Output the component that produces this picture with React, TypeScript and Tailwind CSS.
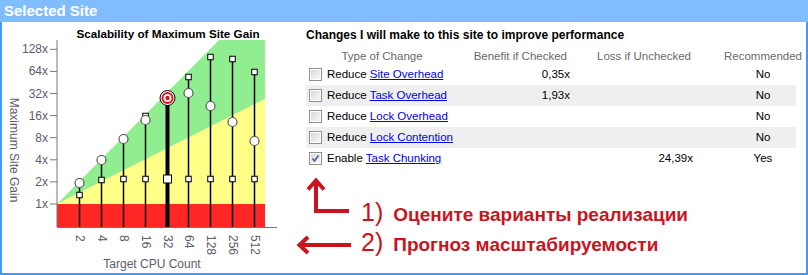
const rows = [
  { verb: "Reduce", link: "Site Overhead", benefit: "0,35x", loss: "", rec: "No", checked: false },
  { verb: "Reduce", link: "Task Overhead", benefit: "1,93x", loss: "", rec: "No", checked: false },
  { verb: "Reduce", link: "Lock Overhead", benefit: "", loss: "", rec: "No", checked: false },
  { verb: "Reduce", link: "Lock Contention", benefit: "", loss: "", rec: "No", checked: false },
  { verb: "Enable", link: "Task Chunking", benefit: "", loss: "24,39x", rec: "Yes", checked: true },
];

// pixel positions measured off the chart (page coordinates)
const series = [
  { n: 2, circle: 183, squares: [195] },
  { n: 4, circle: 160, squares: [180] },
  { n: 8, circle: 139, squares: [179] },
  { n: 16, circle: 120, squares: [116, 179] },
  { n: 32, target: 98, squares: [179] },
  { n: 64, circle: 93, squares: [77, 179] },
  { n: 128, circle: 106, squares: [57, 179] },
  { n: 256, circle: 122, squares: [59, 179] },
  { n: 512, circle: 141, squares: [72, 179] },
];

const yTicks = ["1x", "2x", "4x", "8x", "16x", "32x", "64x", "128x"];

const X = (n: number) => 57 + 21.9 * Math.log2(n);
const Yg = (i: number) => 204 - 22.1 * i;

function Chart() {
  return (
    <svg width={288} height={251} viewBox="2 22 288 251" className="shrink-0">
      <text x={168} y={38} textAnchor="middle" fontSize={11.7} fontWeight={700} fill="#000">
        Scalability of Maximum Site Gain
      </text>

      <polygon points="57,204 219,40 265,40 265,99" fill="#90ee90" />
      <polygon points="57,204 265,99 265,204" fill="#ffff88" />
      <rect x={57} y={204} width={208} height={23} fill="#ff2626" />

      <line x1={57} y1={40} x2={57} y2={227} stroke="#777" strokeWidth={1} />
      <line x1={57} y1={227.5} x2={277} y2={227.5} stroke="#777" strokeWidth={1} />

      {yTicks.map((t, i) => (
        <g key={t}>
          <line x1={50} y1={Yg(i)} x2={57} y2={Yg(i)} stroke="#777" />
          <text x={48} y={Yg(i) + 4} textAnchor="end" fontSize={12} fill="#5c5c6c">
            {t}
          </text>
        </g>
      ))}

      {series.map((s) => {
        const x = Math.round(X(s.n)) + 0.5;
        const ys = [...s.squares, s.circle ?? 999, s.target ?? 999];
        const top = Math.min(...ys);
        return (
          <line
            key={"l" + s.n}
            x1={x}
            y1={227}
            x2={x}
            y2={top}
            stroke="#000"
            strokeWidth={s.target ? 4 : 1.5}
          />
        );
      })}

      {series.map((s) => {
        const x = Math.round(X(s.n)) + 0.5;
        return s.squares.map((sy) => {
          const big = s.target && sy === 179;
          const h = big ? 8 : 5.5;
          return (
            <rect
              key={"s" + s.n + sy}
              x={x - h / 2}
              y={sy - h / 2}
              width={h}
              height={h}
              fill="#fff"
              stroke="#000"
              strokeWidth={1}
            />
          );
        });
      })}

      {series.map((s) => {
        const x = Math.round(X(s.n)) + 0.5;
        if (s.target) {
          return (
            <g key={"t" + s.n}>
              <circle cx={x} cy={s.target} r={7.5} fill="#fff" stroke="#000" strokeWidth={1} />
              <circle cx={x} cy={s.target} r={6} fill="#e8101a" />
              <circle cx={x} cy={s.target} r={4} fill="#fff" />
              <circle cx={x} cy={s.target} r={2.2} fill="#e8101a" />
            </g>
          );
        }
        return (
          <circle
            key={"c" + s.n}
            cx={x}
            cy={s.circle}
            r={4.5}
            fill="#fff"
            stroke="#555"
            strokeWidth={1.2}
          />
        );
      })}

      {series.map((s) => (
        <text
          key={"x" + s.n}
          transform={`translate(${Math.round(X(s.n)) + 0.5},235) rotate(90)`}
          fontSize={12}
          fill="#5c5c6c"
          dominantBaseline="middle"
        >
          {s.n}
        </text>
      ))}

      <text x={152} y={268} textAnchor="middle" fontSize={12} fill="#5c5c6c">
        Target CPU Count
      </text>
      <text
        transform="translate(13,150) rotate(90)"
        textAnchor="middle"
        dominantBaseline="middle"
        fontSize={12}
        fill="#5c5c6c"
      >
        Maximum Site Gain
      </text>
    </svg>
  );
}

function Checkbox({ checked }: { checked: boolean }) {
  return (
    <div className="w-[13px] h-[13px] border border-[#8e8f8f] bg-white p-px shrink-0">
      <div className="w-full h-full bg-gradient-to-br from-[#d8d8d8] to-[#f8f8f8] flex items-center justify-center">
        {checked && (
          <svg width={9} height={9} viewBox="0 0 9 9">
            <path d="M1.5 4.5 L3.5 7 L7.5 1.5" fill="none" stroke="#4a5d8f" strokeWidth={1.6} />
          </svg>
        )}
      </div>
    </div>
  );
}

export default function App() {
  return (
    <div className="w-[808px] h-[275px] flex flex-col bg-white overflow-hidden font-['Liberation_Sans',Arial,sans-serif]">
      <div className="h-[22px] shrink-0 bg-[#80bdff] px-[4px] text-white font-bold text-[15px] leading-[22px]">
        Selected Site
      </div>
      <div className="flex-1 flex border-x-2 border-b-2 border-[#3d9bff]">
        <Chart />
        <div className="flex-1 flex flex-col pl-[16px] text-[11.5px] text-black">
          <div className="pt-[6px] h-[20px] leading-[14px] font-bold text-[12px]">
            Changes I will make to this site to improve performance
          </div>
          <div className="mt-[7px] flex h-[15px] leading-[15px] text-[#6a6a6a]">
            <div className="w-[152px] text-center">Type of Change</div>
            <div className="w-[114px] text-right pr-[5px]">Benefit if Checked</div>
            <div className="w-[123px] text-right pr-[4px]">Loss if Unchecked</div>
            <div className="w-[101px] text-center pl-[29px]">Recommended</div>
          </div>
          {rows.map((r, i) => (
            <div
              key={r.link}
              className={"flex h-[21px] items-center w-[490px] " + (i % 2 === 1 ? "bg-[#efefef]" : "")}
            >
              <div className="w-[152px] flex items-center">
                <div className="ml-[3px]">
                  <Checkbox checked={r.checked} />
                </div>
                <span className="ml-[5px] whitespace-nowrap">
                  {r.verb}{" "}
                  <span className="text-[#0000ee] underline">{r.link}</span>
                </span>
              </div>
              <div className="w-[114px] text-right pr-[2px]">{r.benefit}</div>
              <div className="w-[123px] text-right pr-[2px]">{r.loss}</div>
              <div className="w-[101px] text-center pl-[35px]">{r.rec}</div>
            </div>
          ))}
          <div className="mt-[1px] flex -ml-[12px]">
            <svg width={60} height={86} viewBox="296 170 60 86" className="shrink-0">
              <g fill="none" stroke="#c8141e" strokeWidth={4}>
                <path d="M351 211 H318 V181" strokeLinejoin="miter" />
                <path d="M310 189.5 L318 180.5 L326 189.5" />
                <path d="M353 245 H302" />
                <path d="M310 237 L301.5 245 L310 253" />
              </g>
            </svg>
            <div className="ml-[7px] flex flex-col text-[#c8141e]">
              <div className="mt-[27px] h-[30px] flex items-baseline leading-[30px] whitespace-nowrap">
                <span className="text-[25px]">1)</span>
                <span className="ml-[10px] text-[19px] font-bold">Оцените варианты реализации</span>
              </div>
              <div className="h-[30px] flex items-baseline leading-[30px] whitespace-nowrap">
                <span className="text-[25px]">2)</span>
                <span className="ml-[10px] text-[19px] font-bold">Прогноз масштабируемости</span>
              </div>
            </div>
          </div>
        </div>
      </div>
    </div>
  );
}
